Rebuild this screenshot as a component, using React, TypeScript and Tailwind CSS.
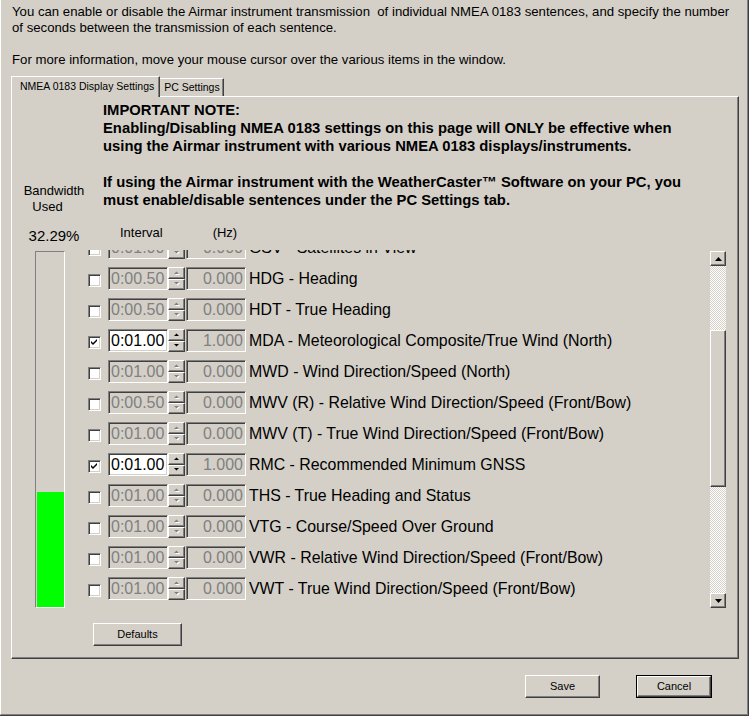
import React from "react";

type Row = { on: boolean; interval: string; hz: string; label: string };

const rows: Row[] = [
  { on: false, interval: "0:01.00", hz: "0.000", label: "GSV - Satellites in View" },
  { on: false, interval: "0:00.50", hz: "0.000", label: "HDG - Heading" },
  { on: false, interval: "0:00.50", hz: "0.000", label: "HDT - True Heading" },
  { on: true, interval: "0:01.00", hz: "1.000", label: "MDA - Meteorological Composite/True Wind (North)" },
  { on: false, interval: "0:01.00", hz: "0.000", label: "MWD - Wind Direction/Speed (North)" },
  { on: false, interval: "0:00.50", hz: "0.000", label: "MWV (R) - Relative Wind Direction/Speed (Front/Bow)" },
  { on: false, interval: "0:01.00", hz: "0.000", label: "MWV (T) - True Wind Direction/Speed (Front/Bow)" },
  { on: true, interval: "0:01.00", hz: "1.000", label: "RMC - Recommended Minimum GNSS" },
  { on: false, interval: "0:01.00", hz: "0.000", label: "THS - True Heading and Status" },
  { on: false, interval: "0:01.00", hz: "0.000", label: "VTG - Course/Speed Over Ground" },
  { on: false, interval: "0:01.00", hz: "0.000", label: "VWR - Relative Wind Direction/Speed (Front/Bow)" },
  { on: false, interval: "0:01.00", hz: "0.000", label: "VWT - True Wind Direction/Speed (Front/Bow)" },
  { on: false, interval: "0:01.00", hz: "0.000", label: "XDR - Transducer Measurements" },
];

const bandwidth = 32.29;

const raised =
  "border border-t-white border-l-white border-r-[#404040] border-b-[#404040] shadow-[inset_-1px_-1px_#808080]";
const sunken =
  "border border-t-[#808080] border-l-[#808080] border-r-white border-b-white shadow-[inset_1px_1px_#404040,inset_-1px_-1px_#d4d0c8]";

const Checkbox = ({ checked }: { checked: boolean }) => (
  <div className={`mt-[3px] h-[13px] w-[13px] shrink-0 bg-white ${sunken}`}>
    {checked && (
      <svg width="11" height="11" viewBox="0 0 11 11" className="block">
        <path d="M2 4 L4 6 L8 2 L8 4 L4 8 L2 6 Z" fill="#000" />
      </svg>
    )}
  </div>
);

const Arrow = ({ up, enabled }: { up: boolean; enabled: boolean }) => {
  const pts = up ? "0,3 2.5,0.5 5,3" : "0,0 2.5,2.5 5,0";
  return (
    <svg width="6" height="4" viewBox="0 0 6 4" className="block">
      {!enabled && <polygon points={pts} fill="#fff" transform="translate(1,1)" />}
      <polygon points={pts} fill={enabled ? "#000" : "#808080"} />
    </svg>
  );
};

const Spinner = ({ enabled }: { enabled: boolean }) => (
  <div className="flex h-[23px] w-[17px] shrink-0 flex-col">
    <div className={`flex flex-1 items-center justify-center bg-[#d4d0c8] ${raised}`}>
      <Arrow up enabled={enabled} />
    </div>
    <div className={`flex flex-1 items-center justify-center bg-[#d4d0c8] ${raised}`}>
      <Arrow up={false} enabled={enabled} />
    </div>
  </div>
);

const SentenceRow = ({ row }: { row: Row }) => (
  <div className="flex h-[31px] items-center">
    <Checkbox checked={row.on} />
    <div
      className={`ml-[7px] flex h-[23px] w-[60px] shrink-0 items-center pl-[2px] pt-[1px] text-[16px] ${sunken} ${
        row.on ? "bg-white text-black" : "bg-[#d4d0c8] text-[#808080]"
      }`}
    >
      {row.interval}
    </div>
    <Spinner enabled={row.on} />
    <div
      className={`ml-[1px] flex h-[23px] w-[60px] shrink-0 items-center justify-end bg-[#d4d0c8] pr-[2px] pt-[1px] text-[16px] text-[#808080] ${sunken}`}
    >
      {row.hz}
    </div>
    <span className="ml-[3px] whitespace-nowrap pt-[1px] text-[15.9px] text-black">{row.label}</span>
  </div>
);

const WinButton = ({ label, isDefault, className }: { label: string; isDefault?: boolean; className: string }) => (
  <div className={`${className} ${isDefault ? "border border-black" : ""}`}>
    <div className={`flex h-full w-full items-center justify-center bg-[#d4d0c8] text-[11px] text-black ${raised}`}>
      {label}
    </div>
  </div>
);

export default function App() {
  return (
    <div className="h-[716px] w-[749px] overflow-hidden bg-[#d4d0c8] font-['Liberation_Sans',Arial,sans-serif] text-black">
      <div className="h-full w-full border-r border-b border-r-[#404040] border-b-[#404040]">
        <div className="flex h-full w-full flex-col border-l border-r border-b border-l-white border-r-[#808080] border-b-[#808080] pl-[1px]">
          {/* intro text */}
          <div className="pl-[10px] pt-[4px] text-[13.2px] leading-[16px]">
            <div className="whitespace-pre">
              {"You can enable or disable the Airmar instrument transmission  of individual NMEA 0183 sentences, and specify the number"}
            </div>
            <div>of seconds between the transmission of each sentence.</div>
            <div className="h-[16px]" />
            <div>For more information, move your mouse cursor over the various items in the window.</div>
          </div>

          {/* tabs */}
          <div className="relative z-10 ml-[9px] mt-[8px] flex h-[20px] items-end text-[10.5px]">
            <div className="flex h-[21px] -mb-px items-center border-t border-l border-r border-t-white border-l-white border-r-[#404040] bg-[#d4d0c8] pl-[8px] pr-[5px] pb-[1px] shadow-[inset_-1px_0_#808080]">
              NMEA 0183 Display Settings
            </div>
            <div className="flex h-[18px] items-center border-t border-r border-t-white border-r-[#404040] pl-[4px] pr-[3px] shadow-[inset_-1px_0_#808080]">
              PC Settings
            </div>
          </div>

          {/* panel */}
          <div className={`ml-[9px] flex h-[563px] w-[728px] flex-col ${raised}`}>
            <div className="flex h-[511px]">
              {/* bandwidth column */}
              <div className="flex w-[76px] shrink-0 flex-col pt-[86px]">
                <div className="pl-[8px] text-center text-[13px] leading-[16px]">Bandwidth</div>
                <div className="pr-[5px] text-center text-[13px] leading-[16px]">Used</div>
                <div className="mt-[12px] pl-[8px] text-center text-[15px] leading-[18px]">{bandwidth.toFixed(2)}%</div>
                <div className="ml-[23px] mt-[6px] flex h-[357px] w-[30px] flex-col justify-end border border-t-[#808080] border-l-[#808080] border-r-white border-b-white pl-[1px]">
                  <div className="w-full bg-[#00ff00]" style={{ height: `${bandwidth}%` }} />
                </div>
              </div>

              {/* main column */}
              <div className="flex min-w-0 flex-1 flex-col pr-[12px]">
                <div className="pl-[15px] pt-[4px] text-[14.8px] font-bold leading-[18px]">
                  <div>IMPORTANT NOTE:</div>
                  <div>Enabling/Disabling NMEA 0183 settings on this page will ONLY be effective when</div>
                  <div>using the Airmar instrument with various NMEA 0183 displays/instruments.</div>
                  <div className="h-[18px]" />
                  <div>If using the Airmar instrument with the WeatherCaster™ Software on your PC, you</div>
                  <div>must enable/disable sentences under the PC Settings tab.</div>
                </div>

                <div className="mt-[16px] flex h-[16px] text-[13px] leading-[16px]">
                  <span className="ml-[32px]">Interval</span>
                  <span className="ml-[50px]">(Hz)</span>
                </div>

                <div className="mt-[9px] flex h-[358px]">
                  <div className="min-w-0 flex-1 overflow-hidden">
                    <div className="-mt-[18px]">
                      {rows.map((r) => (
                        <SentenceRow key={r.label} row={r} />
                      ))}
                    </div>
                  </div>
                  {/* scrollbar */}
                  <div className="mt-[1px] flex w-[16px] shrink-0 flex-col">
                    <div className={`flex h-[15px] items-center justify-center bg-[#d4d0c8] ${raised}`}>
                      <svg width="7" height="4" viewBox="0 0 7 4" className="block">
                        <polygon points="0,4 3.5,0 7,4" fill="#000" />
                      </svg>
                    </div>
                    <div className="flex flex-1 flex-col bg-[repeating-conic-gradient(#ffffff_0%_25%,#d4d0c8_0%_50%)] bg-[length:2px_2px]">
                      <div className="h-[64px]" />
                      <div className={`h-[157px] bg-[#d4d0c8] ${raised}`} />
                    </div>
                    <div className={`flex h-[15px] items-center justify-center bg-[#d4d0c8] ${raised}`}>
                      <svg width="7" height="4" viewBox="0 0 7 4" className="block">
                        <polygon points="0,0 3.5,4 7,0" fill="#000" />
                      </svg>
                    </div>
                  </div>
                </div>
              </div>
            </div>

            <WinButton label="Defaults" className="ml-[81px] mt-[15px] h-[23px] w-[89px]" />
          </div>

          {/* bottom buttons */}
          <div className="mt-[16px] flex">
            <WinButton label="Save" className="ml-[523px] h-[23px] w-[75px]" />
            <WinButton label="Cancel" isDefault className="ml-[36px] h-[23px] w-[76px]" />
          </div>
        </div>
      </div>
    </div>
  );
}
